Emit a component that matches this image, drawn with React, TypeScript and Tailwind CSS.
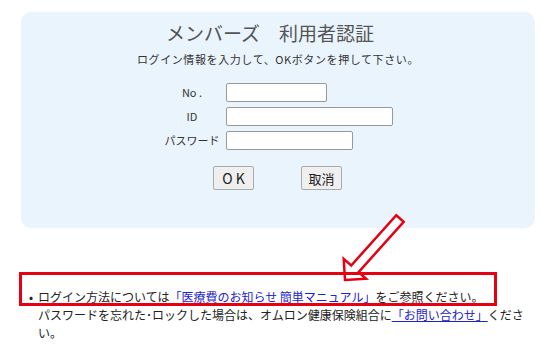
const JP = "font-['Noto_Sans_CJK_JP','Noto_Sans',sans-serif]";

function Arrow() {
  return (
    <svg
      className="absolute left-0 top-0 z-0"
      width={553}
      height={352}
      viewBox="0 0 553 352"
      aria-hidden
    >
      <polygon
        points="345,280 366.1,278.7 358.6,272.1 403.7,221.8 396.3,215.2 351.2,265.5 343.7,258.9"
        fill="#ffffff"
        stroke="#e60012"
        strokeWidth={2.5}
        strokeLinejoin="miter"
      />
    </svg>
  );
}

export default function App() {
  return (
    <div className={`relative h-[352px] w-[553px] overflow-hidden bg-white text-[#222] ${JP}`}>
      {/* Login panel */}
      <div className="relative z-0 ml-[21px] mt-[12px] flex h-[216px] w-[514px] flex-col rounded-[10px] bg-[#eaf4fc]">
        <h1 className="mt-[9px] pr-[16px] text-center text-[19px] leading-[24px] text-[#555]">
          メンバーズ　利用者認証
        </h1>
        <p className="mt-[6px] text-center text-[11px] leading-[16px] tracking-[0.6px] text-[#333]">
          ログイン情報を入力して、OKボタンを押して下さい。
        </p>

        <div className="ml-[139px] mt-[16px] flex flex-col gap-[5px] text-[11px] text-[#333]">
          <div className="flex h-[19px] items-center">
            <span className="w-[64px] text-center">No .</span>
            <input className="ml-[2px] h-[19px] w-[101px] rounded-[2px] border border-[#999] bg-white" />
          </div>
          <div className="flex h-[19px] items-center">
            <span className="w-[64px] text-center">ID</span>
            <input className="ml-[2px] h-[19px] w-[167px] rounded-[2px] border border-[#999] bg-white" />
          </div>
          <div className="flex h-[19px] items-center">
            <span className="w-[64px] text-center">パスワード</span>
            <input className="ml-[2px] h-[19px] w-[127px] rounded-[2px] border border-[#999] bg-white" />
          </div>
        </div>

        <div className="ml-[192px] mt-[16px] flex gap-[47px] text-[#222]">
          <button className="h-[24px] w-[41px] rounded-[2px] border border-[#aaa] bg-[#efefef] text-[14px] leading-none">
            O K
          </button>
          <button className="h-[24px] w-[41px] rounded-[2px] border border-[#aaa] bg-[#efefef] text-[13px] leading-none">
            取消
          </button>
        </div>
      </div>

      <Arrow />

      {/* Notes */}
      <ul className="relative z-0 ml-[29px] mt-[60px] w-[500px] text-[12px] leading-[18px] text-[#222]">
        <li className="flex">
          <span className="w-[9px] shrink-0">•</span>
          <span>
            ログイン方法については
            <a href="#" className="text-[#2222cc] underline">「医療費のお知らせ 簡単マニュアル」</a>
            をご参照ください。
            <br />
            パスワードを忘れた･ロックした場合は、オムロン健康保険組合に
            <a href="#" className="text-[#2222cc] underline">「お問い合わせ」</a>
            ください。
          </span>
        </li>
      </ul>

      {/* Highlight box */}
      <div className="absolute left-[19px] top-[272px] z-10 h-[34px] w-[478px] border-[3px] border-[#e60012]" />
    </div>
  );
}
